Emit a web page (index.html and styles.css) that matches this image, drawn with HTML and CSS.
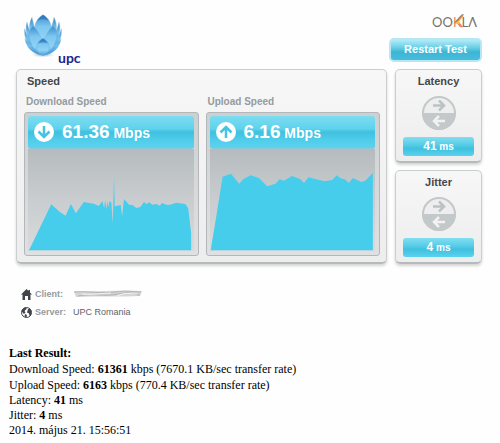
FILE: index.html
```html
<!DOCTYPE html>
<html lang="en">
<head>
<meta charset="utf-8">
<title>UPC Speed Test</title>
<link rel="stylesheet" href="styles.css">
</head>
<body>
<svg class="defs" width="0" height="0" aria-hidden="true">
  <defs>
    <linearGradient id="petal" x1="0" y1="0" x2="0" y2="1">
      <stop offset="0" stop-color="#3c8bcd"/><stop offset=".35" stop-color="#7cc6f0"/><stop offset=".7" stop-color="#8fd3f6"/><stop offset="1" stop-color="#4a9fdc"/>
    </linearGradient>
    <linearGradient id="petal-back" x1="0" y1="0" x2="0" y2="1">
      <stop offset="0" stop-color="#3f7fbc"/><stop offset=".4" stop-color="#74c0ec"/><stop offset="1" stop-color="#3c8fce"/>
    </linearGradient>
    <radialGradient id="ground"><stop offset="0" stop-color="#7e8ca0"/><stop offset="1" stop-color="#fff" stop-opacity="0"/></radialGradient>
    <symbol id="swap" viewBox="0 0 36 36">
      <circle cx="18" cy="18" r="16" fill="#eeeeee" stroke="#c3c8ca" stroke-width="2"/>
      <path d="M1 18a17 17 0 0 0 34 0z" fill="#c3c8ca"/>
      <path d="M12 10.500h11M18 5.500l5 5-5 5" fill="none" stroke="#bcc2c4" stroke-width="2.500"/>
      <path d="M24 26H13M18 21l-5 5 5 5" fill="none" stroke="#f2f2f2" stroke-width="2.500"/>
    </symbol>
  </defs>
</svg>
<div class="page">
  <header class="top">
    <div class="brand">
      <svg class="lotus" viewBox="0 0 114 132" aria-hidden="true">
        <ellipse cx="57" cy="122" rx="42" ry="10" fill="url(#ground)"/>
        <g fill="url(#petal-back)" stroke="#8cc9ee">
          <path d="M24 10C12 32 14 60 30 88L52 74C36 54 28 32 24 10z"/>
          <path d="M90 10c12 22 10 50-6 78L62 74C78 54 86 32 90 10z"/>
          <path d="M9 24C0 54 12 86 44 108L50 86C26 72 14 48 9 24z"/>
          <path d="M105 24c9 30-3 62-35 84l-6-22c24-14 36-38 41-62z"/>
          <path d="M2 44c-4 32 14 62 48 74l4-22C24 90 8 68 2 44z"/>
          <path d="M112 44c4 32-14 62-48 74l-4-22c30-6 46-28 52-52z"/>
          <path d="M3 74c4 26 20 46 54 50V100C30 102 14 92 3 74z"/>
          <path d="M111 74c-4 26-20 46-54 50V100c27 2 43-8 54-26z"/>
        </g>
        <g fill="url(#petal)" stroke="#5eaadd">
          <path d="M57 2C40 12 31 28 32 50c1 22 11 38 25 52 14-14 24-30 25-52C83 28 74 12 57 2z"/>
          <path d="M27 36C13 48 13 70 22 90c7 15 20 29 35 34C60 90 50 56 27 36z"/>
          <path d="M87 36c14 12 14 34 5 54-7 15-20 29-35 34C54 90 64 56 87 36z"/>
          <path d="M57 73c-13 7-20 17-19 29 1 10 9 18 19 22 10-4 18-12 19-22 1-12-6-22-19-29z"/>
        </g>
        <path d="M57 3C50 8 44 13 41 20c10-6 22-6 32 0C70 13 64 8 57 3zM57 74c-7 4-12 9-14 14 9-4 19-4 28 0-2-5-7-10-14-14z" fill="#2468b4" opacity=".6"/>
      </svg>
      <span class="brand-name">upc</span>
    </div>
    <div class="actions">
      <div class="ookla">OO<span>K</span>LΛ
        <svg class="swoosh" viewBox="0 0 33 44" aria-hidden="true">
          <path d="M1 29L24 4 33 0 31 7 16 25 6 31z" fill="#f29242"/>
          <path d="M3 27L28 1 33 0 29 4 10 25z" fill="#8b8277"/>
          <path d="M8 29l9-6 14 19h-8L13 31z" fill="#ec8070"/>
          <path d="M8 27l9-6 5 7-5 4z" fill="#f6c04f"/>
        </svg>
      </div>
      <button class="restart" type="button">Restart Test</button>
    </div>
  </header>

  <main class="results">
    <section class="panel speed">
      <h1>Speed</h1>
      <div class="charts">
        <div class="chart">
          <h2>Download Speed</h2>
          <div class="frame">
            <div class="reading">
              <svg class="arrow" viewBox="0 0 20 20" aria-hidden="true"><circle cx="10" cy="10" r="10" fill="#fff"/><path d="M10 4v11M4.500 9.500L10 15l5.500-5.500" fill="none" stroke="#46c3e2" stroke-width="2.500"/></svg>
              <span><b>61.36</b> Mbps</span>
            </div>
            <svg class="plot" viewBox="0 0 498 306" preserveAspectRatio="none" role="img" aria-label="Download speed over time">
              <polygon points="3,304 70,166 96,189 113,200 129,165 144,193 168,159 198,164 213,171 224,156 229,177 232,153 236,179 239,156 242,175 245,156 251,161 255,223 259,81 261,172 279,168 283,202 289,150 304,167 316,169 326,177 338,174 349,159 357,165 365,160 374,167 386,165 397,170 403,162 416,167 428,167 446,161 473,165 482,177 491,253 491,304"/>
            </svg>
          </div>
        </div>
        <div class="chart">
          <h2>Upload Speed</h2>
          <div class="frame">
            <div class="reading">
              <svg class="arrow" viewBox="0 0 20 20" aria-hidden="true"><circle cx="10" cy="10" r="10" fill="#fff"/><path d="M10 16V5M4.500 10.500L10 5l5.500 5.500" fill="none" stroke="#46c3e2" stroke-width="2.500"/></svg>
              <span><b>6.16</b> Mbps</span>
            </div>
            <svg class="plot" viewBox="0 0 498 306" preserveAspectRatio="none" role="img" aria-label="Upload speed over time">
              <polygon points="2,304 18,208 38,83 63,74 88,104 101,90 123,79 148,88 172,112 197,104 209,91 222,95 247,81 271,90 283,102 296,85 344,97 368,93 381,79 393,88 405,91 418,101 430,87 455,99 467,95 490,72 490,304"/>
            </svg>
          </div>
        </div>
      </div>
    </section>
    <div class="side">
      <section class="panel metric">
        <h1>Latency</h1>
        <svg class="swap" aria-hidden="true"><use href="#swap"/></svg>
        <p class="value"><b>41</b> ms</p>
      </section>
      <section class="panel metric">
        <h1>Jitter</h1>
        <svg class="swap" aria-hidden="true"><use href="#swap"/></svg>
        <p class="value"><b>4</b> ms</p>
      </section>
    </div>
  </main>

  <dl class="hosts">
    <div>
      <svg viewBox="0 0 11 11" aria-hidden="true"><path d="M5.500 0L0 5.500h1.500V11H4V7h3v4h2.500V5.500H11L9 3.500V1H7.500v1z" fill="#414549"/></svg>
      <dt>Client:</dt>
      <dd><svg class="smudge" viewBox="0 0 70 8" preserveAspectRatio="none" aria-hidden="true"><path d="M1 1C22 2 46 0 69 1L67 6C48 7 24 6 3 7z" fill="#d5d5d5"/><path d="M1 2C18 1 28 4 42 2S58 2 68 2M5 6C22 3 31 7 45 4S60 5 67 5" stroke="#b4b4b4" fill="none"/><path d="M9 4C22 5 31 3 38 3M44 6C52 2 58 4 64 4" stroke="#f5f5f5" fill="none"/></svg></dd>
    </div>
    <div>
      <svg viewBox="0 0 11 11" aria-hidden="true"><circle cx="5.500" cy="5.500" r="5" fill="#fff" stroke="#414549"/><path d="M1 3l3-2.500 2 .5-1 1.500L3.500 4l1 1.500L3 7 1 5zM7 2l2-.5L10.500 4 10 8 8.500 9 8 6.500 6 5.500zM4 7l2 1-.5 2.500-2-1z" fill="#414549"/></svg>
      <dt>Server:</dt>
      <dd>UPC Romania</dd>
    </div>
  </dl>
</div>

<section class="last">
  <div class="rates">
    <h2>Last Result:</h2>
    <p>Download Speed: <b>61361</b> kbps (7670.1 KB/sec transfer rate)</p>
    <p>Upload Speed: <b>6163</b> kbps (770.4 KB/sec transfer rate)</p>
  </div>
  <p>Latency: <b>41</b> ms</p>
  <p>Jitter: <b>4</b> ms</p>
  <p>2014. május 21. 15:56:51</p>
</section>
</body>
</html>
```
FILE: styles.css
```css
* {
  box-sizing: border-box;
}

body {
  margin: 0;
  background: #fefefe;
  color: #43484c;
  font-family: "Liberation Sans", Arial, sans-serif;
}

h1, h2, p, dl, dd {
  margin: 0;
}

.defs {
  position: absolute;
}

.page {
  padding: 14px 18px 0 16px;
}

.top {
  display: flex;
  justify-content: space-between;
  padding-left: 8px;
  height: 55px;
}

.brand {
  display: flex;
  align-items: flex-start;
}

.lotus {
  width: 38px;
  height: 44px;
}

.brand-name {
  margin: 35px 0 0 -4px;
  font: bold 14px/18px Lato, sans-serif;
  color: #23238c;
}

.actions {
  display: flex;
  flex-direction: column;
  align-items: flex-end;
  gap: 8px;
}

.ookla {
  position: relative;
  padding-right: 5px;
  font: 13px/16px Lato, sans-serif;
  color: #77716b;
}

.ookla span {
  color: #dd8a52;
}

.swoosh {
  position: absolute;
  left: 21px;
  top: 0;
  width: 11px;
  height: 14px;
}

.restart {
  width: 93px;
  height: 24px;
  padding: 0 0 2px;
  border: 2px solid #b5e8f4;
  border-radius: 5px;
  background: linear-gradient(#b0ebf7, #66cde4 40%, #3cb5d4 60%, #48bddb);
  color: #fff;
  font: bold 11px/16px "Liberation Sans", Arial, sans-serif;
}

.results {
  display: grid;
  grid-template-columns: 1fr 87px;
  gap: 8px;
}

.panel {
  border: 1px solid #cacecf;
  border-bottom: 2px solid #b5babb;
  border-radius: 5px;
  background: linear-gradient(#f7f7f7, #ededed);
  box-shadow: 0 2px 3px #d3d3d3;
}

.panel h1 {
  font-size: 11px;
  line-height: 14px;
}

.speed {
  padding: 4px 6px 6px 7px;
}

.speed h1 {
  padding-left: 3px;
}

.charts {
  display: grid;
  grid-template-columns: 1fr 1fr;
  gap: 7px;
  margin-top: 7px;
}

.chart h2 {
  padding: 0 0 3px 2px;
  font-size: 10px;
  line-height: 14px;
  color: #949b9f;
}

.frame {
  padding: 3px 4px 4px 3px;
  border: 1px solid #b2b8ba;
  border-radius: 3px;
  background: linear-gradient(#cdd0d1, #dfe0e1);
}

.reading {
  display: flex;
  align-items: center;
  gap: 8px;
  height: 33px;
  padding-left: 6px;
  border-bottom: 1px solid #8cc7d6;
  border-radius: 3px;
  background: linear-gradient(#7ddcf1, #5fd2ec 40%, #3fc1df 50%, #50cdea 75%, #5bd3ee);
  color: #fff;
  font-size: 14px;
  font-weight: bold;
  line-height: 24px;
}

.reading b {
  font-size: 19px;
}

.arrow {
  width: 20px;
  height: 20px;
}

.plot {
  display: block;
  width: 100%;
  height: 102px;
  background: linear-gradient(#b5bbbe, #c9cdcf 50%, #d9dadb);
}

.plot polygon {
  fill: #46cdec;
}

.side {
  display: grid;
  grid-template-rows: 1fr 1fr;
  gap: 7px;
}

.metric {
  display: flex;
  flex-direction: column;
  align-items: center;
  padding: 4px 7px;
}

.swap {
  width: 36px;
  height: 36px;
  margin: 7px 0 6px;
}

.value {
  align-self: stretch;
  border-radius: 3px;
  background: linear-gradient(#82def1, #58cde8 40%, #3fc1df 60%, #5ad2ed);
  color: #fff;
  font-size: 10px;
  font-weight: bold;
  line-height: 19px;
  text-align: center;
}

.value b {
  font-size: 12px;
}

.hosts {
  display: grid;
  gap: 4px;
  padding: 23px 0 0 5px;
  font-size: 9px;
  line-height: 14px;
}

.hosts div {
  display: grid;
  grid-template-columns: 11px 34px 1fr;
  align-items: center;
  column-gap: 3px;
}

.hosts div > svg {
  width: 11px;
  height: 11px;
}

.hosts dt {
  font-weight: bold;
  color: #949b9f;
}

.hosts dd {
  padding-left: 1px;
  color: #5f6467;
}

.hosts .smudge {
  display: block;
  width: 70px;
  height: 8px;
}

.last {
  padding: 26px 9px 0;
  color: #000;
  font: 12px/15px "Liberation Serif", "Times New Roman", serif;
}

.last h2 {
  font-size: 12px;
}

.rates, .rates h2 {
  line-height: 16px;
}
```
